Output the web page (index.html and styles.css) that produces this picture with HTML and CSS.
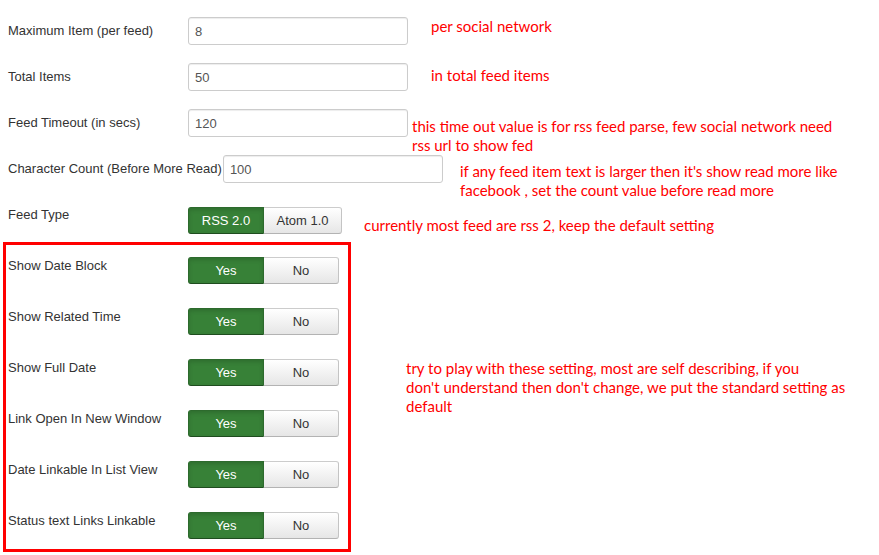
FILE: index.html
```html
<!DOCTYPE html>
<html>
<head>
<meta charset="utf-8">
<link rel="stylesheet" href="styles.css">
</head>
<body>
<div class="page">
  <form class="form">
    <div class="group">
      <label class="label">Maximum Item (per feed)</label>
      <input class="field" type="text" value="8">
    </div>
    <div class="group">
      <label class="label">Total Items</label>
      <input class="field" type="text" value="50">
    </div>
    <div class="group">
      <label class="label">Feed Timeout (in secs)</label>
      <input class="field" type="text" value="120">
    </div>
    <div class="group">
      <label class="label">Character Count (Before More Read)</label>
      <input class="field" type="text" value="100">
    </div>
    <div class="group group-last">
      <label class="label">Feed Type</label>
      <div class="btn-group">
        <span class="btn btn-on">RSS 2.0</span>
        <span class="btn btn-off btn-wide">Atom 1.0</span>
      </div>
    </div>
    <div class="highlight">
      <div class="group">
        <label class="label">Show Date Block</label>
        <div class="btn-group"><span class="btn btn-on">Yes</span><span class="btn btn-off">No</span></div>
      </div>
      <div class="group">
        <label class="label">Show Related Time</label>
        <div class="btn-group"><span class="btn btn-on">Yes</span><span class="btn btn-off">No</span></div>
      </div>
      <div class="group">
        <label class="label">Show Full Date</label>
        <div class="btn-group"><span class="btn btn-on">Yes</span><span class="btn btn-off">No</span></div>
      </div>
      <div class="group">
        <label class="label">Link Open In New Window</label>
        <div class="btn-group"><span class="btn btn-on">Yes</span><span class="btn btn-off">No</span></div>
      </div>
      <div class="group">
        <label class="label">Date Linkable In List View</label>
        <div class="btn-group"><span class="btn btn-on">Yes</span><span class="btn btn-off">No</span></div>
      </div>
      <div class="group">
        <label class="label">Status text Links Linkable</label>
        <div class="btn-group"><span class="btn btn-on">Yes</span><span class="btn btn-off">No</span></div>
      </div>
    </div>
  </form>

  <p class="note note-1">per social network</p>
  <p class="note note-2">in total feed items</p>
  <p class="note note-3">this time out value is for rss feed parse, few social network need<br>rss url to show fed</p>
  <p class="note note-4">if any feed item text is larger then it's show read more like<br>facebook , set the count value before read more</p>
  <p class="note note-5">currently most feed are rss 2, keep the default setting</p>
  <p class="note note-6">try to play with these setting, most are self describing, if you<br>don't understand then don't change, we put the standard setting as<br>default</p>
</div>
</body>
</html>
```
FILE: styles.css
```css
html, body {
  margin: 0;
  padding: 0;
  background: #ffffff;
}

.page {
  position: relative;
  width: 879px;
  height: 555px;
  overflow: hidden;
  font-family: Arial, "Liberation Sans", Helvetica, sans-serif;
  font-size: 13px;
  color: #333333;
}

.form {
  padding: 17px 0 0 8px;
  margin: 0;
}

.group {
  display: flex;
  align-items: flex-start;
  margin-bottom: 18px;
}

.group-last {
  margin-bottom: 8px;
}

.label {
  box-sizing: border-box;
  min-width: 180px;
  padding: 5px 1px 0 0;
  line-height: 18px;
  white-space: nowrap;
}

.highlight .label {
  padding-top: 6px;
}

.field {
  box-sizing: border-box;
  width: 220px;
  height: 28px;
  margin: 0;
  padding: 4px 6px;
  border: 1px solid #cccccc;
  border-radius: 3px;
  box-shadow: inset 0 1px 1px rgba(0, 0, 0, 0.075);
  font-family: Arial, "Liberation Sans", Helvetica, sans-serif;
  font-size: 13px;
  color: #555555;
  line-height: 18px;
}

.btn-group {
  display: flex;
  margin-top: 6px;
}

.btn {
  box-sizing: border-box;
  display: inline-block;
  width: 76px;
  height: 27px;
  line-height: 25px;
  text-align: center;
  font-size: 13px;
  border: 1px solid #b3b3b3;
}

.btn-on {
  background: #378137;
  border-color: #2d6a2d #2d6a2d #1f4d1f;
  color: #ffffff;
  border-radius: 3px 0 0 3px;
  box-shadow: inset 0 2px 4px rgba(0, 0, 0, 0.15);
}

.btn-off {
  width: 75px;
  background: linear-gradient(#ffffff, #e6e6e6);
  border-color: #cccccc #c4c4c4 #b3b3b3 #e0e0e0;
  color: #333333;
  border-radius: 0 3px 3px 0;
  border-left: 0;
}

.btn-wide {
  width: 78px;
}

.highlight {
  width: 348px;
  box-sizing: border-box;
  margin-left: -5px;
  padding: 6px 0 10px 2px;
  border: 3px solid #ff0000;
}

.highlight .group:last-child {
  margin-bottom: 0;
}

.note {
  position: absolute;
  margin: 0;
  font-family: Lato, "Open Sans", sans-serif;
  font-size: 15px;
  line-height: 19px;
  color: #ff0000;
  white-space: nowrap;
}

.note-1 { left: 431px; top: 17px; }
.note-2 { left: 431px; top: 66px; }
.note-3 { left: 412px; top: 117px; }
.note-4 { left: 460px; top: 162px; }
.note-5 { left: 364px; top: 216px; }
.note-6 { left: 406px; top: 359px; }
```
